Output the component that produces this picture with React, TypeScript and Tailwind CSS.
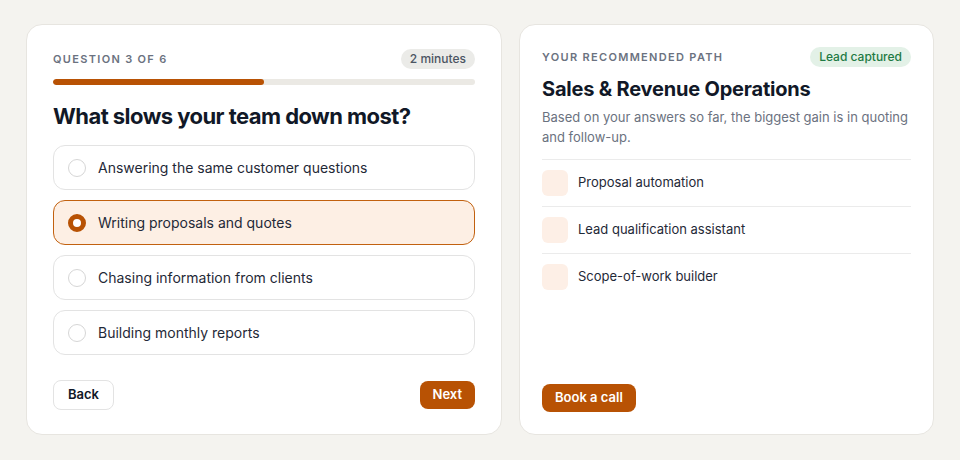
import React from "react";

const options = [
  "Answering the same customer questions",
  "Writing proposals and quotes",
  "Chasing information from clients",
  "Building monthly reports",
];

const recs = ["Proposal automation", "Lead qualification assistant", "Scope-of-work builder"];

export default function App() {
  return (
    <div
      className="h-[460px] w-[960px] bg-[#f4f3ef] px-[26px] pt-6 pb-[25px] flex gap-[17px]"
      style={{ fontFamily: "Inter, 'Noto Sans', sans-serif" }}
    >
      <div className="w-[476px] h-full bg-white rounded-2xl border border-[#e7e5e0] flex flex-col px-[26px] pt-[24px] pb-[24px]">
        <div className="flex items-center justify-between">
          <span className="text-[11px] font-semibold tracking-[0.12em] text-[#6b7280]">QUESTION 3 OF 6</span>
          <span className="h-5 px-[9px] rounded-full bg-[#ebebe8] text-[#4b5563] text-[12px] font-medium flex items-center">2 minutes</span>
        </div>
        <div className="mt-[10px] h-[6px] rounded-full bg-[#ebe9e4] overflow-hidden">
          <div className="h-full w-1/2 rounded-full bg-[#b85204]" />
        </div>
        <h1 className="mt-[17px] text-[22px] leading-7 font-bold tracking-tight text-[#111827]">
          What slows your team down most?
        </h1>
        <div className="mt-[15px] flex flex-col gap-[10px]">
          {options.map((o, i) => {
            const sel = i === 1;
            return (
              <div
                key={o}
                className={
                  sel
                    ? "h-[45px] rounded-xl border border-[#c2610f] bg-[#fdefe4] flex items-center px-[14px] gap-[12px]"
                    : "h-[45px] rounded-xl border border-[#e3e3e3] bg-white flex items-center px-[14px] gap-[12px]"
                }
              >
                {sel ? (
                  <span className="w-[18px] h-[18px] rounded-full border-[5px] border-[#b85204] bg-white box-border" />
                ) : (
                  <span className="w-[18px] h-[18px] rounded-full border-[1.5px] border-[#d6d6d6] bg-white box-border" />
                )}
                <span className="text-[14px] text-[#1f2937]">{o}</span>
              </div>
            );
          })}
        </div>
        <div className="mt-auto flex items-center justify-between">
          <button className="h-[30px] px-[14px] rounded-lg border border-[#e3e3e3] bg-white text-[13px] font-semibold text-[#111827]">
            Back
          </button>
          <button className="h-[28px] px-[13px] rounded-lg bg-[#b85204] text-[13px] font-semibold text-white">
            Next
          </button>
        </div>
      </div>

      <div className="flex-1 h-full bg-white rounded-2xl border border-[#e7e5e0] flex flex-col px-[22px] pt-[22px] pb-[22px]">
        <div className="flex items-center justify-between">
          <span className="text-[11px] font-semibold tracking-[0.12em] text-[#6b7280]">YOUR RECOMMENDED PATH</span>
          <span className="h-5 px-[9px] rounded-full bg-[#e3f1e7] text-[#1e7a44] text-[12px] font-medium flex items-center">
            Lead captured
          </span>
        </div>
        <h2 className="mt-2 text-[20px] leading-7 font-bold tracking-[-0.01em] text-[#111827]">Sales &amp; Revenue Operations</h2>
        <p className="mt-1 text-[13px] leading-5 text-[#6b7280]">
          Based on your answers so far, the biggest gain is in quoting and follow-up.
        </p>
        <div className="mt-3 flex flex-col">
          {recs.map((r) => (
            <div key={r} className="h-[47px] border-t border-[#ebebeb] flex items-center gap-[10px]">
              <span className="w-[26px] h-[26px] rounded-md bg-[#fdefe6]" />
              <span className="text-[13px] text-[#1f2937]">{r}</span>
            </div>
          ))}
        </div>
        <div className="mt-auto">
          <button className="h-[28px] px-[13px] rounded-lg bg-[#b85204] text-[13px] font-semibold text-white">
            Book a call
          </button>
        </div>
      </div>
    </div>
  );
}
